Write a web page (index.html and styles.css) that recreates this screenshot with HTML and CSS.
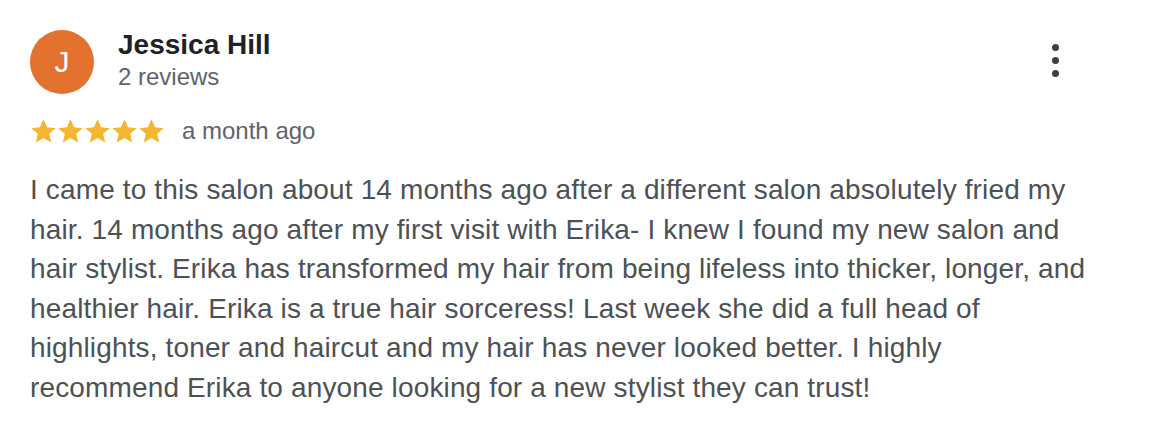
FILE: index.html
```html
<!DOCTYPE html>
<html>
<head>
<meta charset="utf-8">
<link rel="stylesheet" href="styles.css">
</head>
<body>
<div class="review">
  <div class="header">
    <div class="avatar">J</div>
    <div class="who">
      <div class="name">Jessica Hill</div>
      <div class="count">2 reviews</div>
    </div>
    <div class="more" aria-label="More">
      <span class="dot"></span><span class="dot"></span><span class="dot"></span>
    </div>
  </div>
  <div class="meta">
    <div class="stars">
      <svg viewBox="0 0 24 24" class="star"><path d="M12 1.2l3.2 7.1 7.7.7-5.8 5.1 1.7 7.6L12 17.7l-6.8 4 1.7-7.6-5.8-5.1 7.7-.7z"/></svg>
      <svg viewBox="0 0 24 24" class="star"><path d="M12 1.2l3.2 7.1 7.7.7-5.8 5.1 1.7 7.6L12 17.7l-6.8 4 1.7-7.6-5.8-5.1 7.7-.7z"/></svg>
      <svg viewBox="0 0 24 24" class="star"><path d="M12 1.2l3.2 7.1 7.7.7-5.8 5.1 1.7 7.6L12 17.7l-6.8 4 1.7-7.6-5.8-5.1 7.7-.7z"/></svg>
      <svg viewBox="0 0 24 24" class="star"><path d="M12 1.2l3.2 7.1 7.7.7-5.8 5.1 1.7 7.6L12 17.7l-6.8 4 1.7-7.6-5.8-5.1 7.7-.7z"/></svg>
      <svg viewBox="0 0 24 24" class="star"><path d="M12 1.2l3.2 7.1 7.7.7-5.8 5.1 1.7 7.6L12 17.7l-6.8 4 1.7-7.6-5.8-5.1 7.7-.7z"/></svg>
    </div>
    <span class="when">a month ago</span>
  </div>
  <p class="text">I came to this salon about 14 months ago after a different salon absolutely fried my hair. 14 months ago after my first visit with Erika- I knew I found my new salon and hair stylist. Erika has transformed my hair from being lifeless into thicker, longer, and healthier hair. Erika is a true hair sorceress! Last week she did a full head of highlights, toner and haircut and my hair has never looked better. I highly recommend Erika to anyone looking for a new stylist they can trust!</p>
</div>
</body>
</html>
```
FILE: styles.css
```css
html, body {
  margin: 0;
  padding: 0;
  background: #ffffff;
}
body {
  font-family: "Liberation Sans", Arial, Helvetica, sans-serif;
}
.review {
  padding: 30px 0 0 30px;
  width: 1062px;
}
.header {
  display: flex;
  align-items: flex-start;
}
.avatar {
  width: 64px;
  height: 64px;
  border-radius: 50%;
  background: #e2722d;
  color: #ffffff;
  font-size: 30px;
  display: flex;
  align-items: center;
  justify-content: center;
  flex-shrink: 0;
}
.who {
  margin-left: 24px;
  flex: 1;
}
.name {
  font-size: 28px;
  font-weight: bold;
  color: #202124;
  line-height: 32px;
  margin-top: -1px;
}
.count {
  font-size: 24px;
  color: #5f6368;
  line-height: 28px;
  margin-top: 2px;
}
.more {
  display: flex;
  flex-direction: column;
  gap: 6px;
  margin-top: 14px;
  margin-right: 33px;
}
.dot {
  width: 7px;
  height: 7px;
  border-radius: 50%;
  background: #3c4043;
}
.meta {
  display: flex;
  align-items: center;
  margin-top: 23px;
  height: 28px;
}
.stars {
  display: flex;
}
.star {
  width: 27px;
  height: 27px;
  fill: #f4b631;
}
.when {
  font-size: 24px;
  color: #5f6368;
  margin-left: 17px;
}
.text {
  margin: 25px 0 0 0;
  font-size: 28px;
  line-height: 39.6px;
  letter-spacing: 0.14px;
  color: #4d5156;
}
```
